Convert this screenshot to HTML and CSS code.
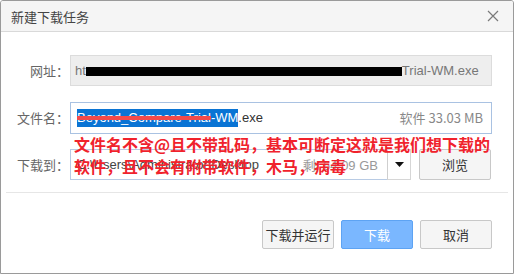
FILE: index.html
```html
<!DOCTYPE html>
<html lang="zh-CN">
<head>
<meta charset="utf-8">
<title>新建下载任务</title>
<link rel="stylesheet" href="styles.css">
</head>
<body>
<div class="dialog">
  <div class="titlebar">
    <span class="title">新建下载任务</span>
    <svg class="close" width="12" height="12" viewBox="0 0 12 12"><path d="M1 1 L11 11 M11 1 L1 11" stroke="#7a7a7a" stroke-width="1.2" fill="none"/></svg>
  </div>
  <div class="content">
    <div class="row">
      <label class="label">网址：</label>
      <div class="field field-url"><span>ht</span><span class="redact"></span><span>Trial-WM.exe</span></div>
    </div>
    <div class="row">
      <label class="label">文件名：</label>
      <div class="field field-name"><span class="sel"><span class="strike">Beyond_Compare-Trial</span>-WM</span><span>.exe</span><span class="size">软件 33.03 MB</span></div>
    </div>
    <div class="row">
      <label class="label">下载到：</label>
      <div class="combo">
        <div class="field field-path"><span>C:\Users\Administrator\Desktop</span><span class="free">剩: 64.09 GB</span></div>
        <div class="drop"><svg width="9" height="5" viewBox="0 0 9 5"><path d="M0 0 H9 L4.5 5 Z" fill="#111"/></svg></div>
      </div>
      <button class="btn browse">浏览</button>
    </div>
    <div class="note">文件名不含@且不带乱码，基本可断定这就是我们想下载的<br>软件，且不会有附带软件，木马，病毒</div>
  </div>
  <div class="sep"></div>
  <div class="actions">
    <button class="btn">下载并运行</button>
    <button class="btn primary">下载</button>
    <button class="btn">取消</button>
  </div>
</div>
</body>
</html>
```
FILE: styles.css
```css
html, body { margin: 0; padding: 0; background: #fff; }
body {
  font-family: "Liberation Sans", "Noto Sans CJK SC", sans-serif;
  font-size: 13px;
  color: #333;
}
.dialog {
  width: 512px;
  height: 272px;
  border: 1px solid #9a9a9a;
  border-radius: 3px 3px 0 0;
  display: flex;
  flex-direction: column;
  position: relative;
  overflow: hidden;
}
.titlebar {
  height: 30px;
  background: #f5f5f5;
  border-bottom: 1px solid #d9d9d9;
  display: flex;
  align-items: center;
  justify-content: space-between;
  padding: 0 14px 0 10px;
}
.title { font-family: "Noto Sans CJK SC", sans-serif; font-size: 13px; color: #444; }
.close { display: block; }
.content {
  padding: 23px 21px 0 8px;
  display: flex;
  flex-direction: column;
  gap: 16px;
  position: relative;
}
.row { display: flex; align-items: center; height: 31px; }
.label {
  width: 60px;
  margin-right: 1px;
  text-align: right;
  color: #666;
  font-family: "Noto Sans CJK SC", sans-serif;
  font-size: 13px;
}
.field {
  box-sizing: border-box;
  height: 31px;
  border: 1px solid #dcdcdc;
  display: flex;
  align-items: center;
  padding: 0 8px 0 4px;
  color: #555;
  white-space: nowrap;
  overflow: hidden;
}
.field-url { flex: 1; background: #eee; color: #777; }
.redact { display: inline-block; width: 316px; height: 9px; background: #000; margin-top: 2px; }
.field-name { flex: 1; border-color: #a9c2e2; padding-left: 6px; color: #333; height: 32px; }
.sel { background: #0a74d4; color: #fff; padding: 0 0 1px 0; line-height: 17px; }
.strike {
  text-decoration: line-through;
  text-decoration-color: #f34a4a;
  text-decoration-thickness: 4px;
}
.size { margin-left: auto; color: #888; font-family: "Noto Sans CJK SC", "Liberation Sans", sans-serif; font-size: 13px; }
.combo { display: flex; width: 341px; }
.field-path { flex: 1; border-color: #b8cbe4; padding-left: 6px; color: #444; }
.free { margin-left: auto; color: #999; padding-right: 1px; }
.drop {
  box-sizing: border-box;
  width: 24px;
  height: 31px;
  border: 1px solid #d6d6d6;
  border-left: 1px solid #cfcfcf;
  margin-left: -1px;
  display: flex;
  align-items: center;
  justify-content: center;
}
.btn {
  box-sizing: border-box;
  width: 72px;
  height: 29px;
  border: 1px solid #c8c8c8;
  border-radius: 2px;
  background: #f5f5f5;
  color: #333;
  font-family: "Noto Sans CJK SC", sans-serif;
  font-size: 13px;
  padding: 0;
}
.browse { margin-left: 8px; height: 31px; }
.primary { background: #7ab7ff; border-color: #5da3f3; color: #fff; }
.note {
  position: absolute;
  left: 73px;
  top: 101px;
  font-family: "Noto Sans CJK SC", sans-serif;
  font-weight: bold;
  font-size: 16px;
  line-height: 22px;
  color: #f0222c;
  white-space: nowrap;
}
.sep { height: 1px; background: #e6e6e6; margin: 12px 5px 0 5px; }
.actions {
  display: flex;
  justify-content: flex-end;
  gap: 7px;
  padding: 27px 21px 0 0;
}
```
